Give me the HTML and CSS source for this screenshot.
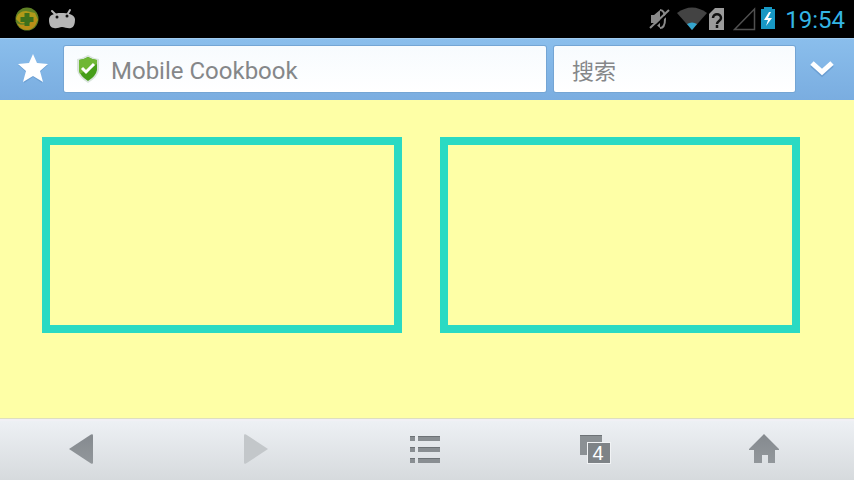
FILE: index.html
```html
<!DOCTYPE html>
<html lang="zh-CN">
<head>
    <meta charset="UTF-8">
    <meta name="viewport" content="width=device-width, initial-scale=1.0">
    <title>Mobile Cookbook</title>
    <link rel="stylesheet" href="styles.css">
</head>
<body>

    <div class="status-bar">
        <div class="status-group">
            <svg width="24" height="24" viewBox="0 0 24 24">
                <circle cx="12" cy="12" r="11.5" fill="#5f8024"/>
                <path d="M1 12C2 7 6 4 11 4l9 2 3 7-5 6-9 1z" fill="#b19a19"/>
                <path d="M2 16c6 4 13 1 20-6 1 7-4 13-10 13-5 0-8-3-10-7z" fill="#b98e18"/>
                <path d="M1 14c4 4 10 3 14 1" fill="none" stroke="#5f8024" stroke-width="1.500"/>
                <path d="M9.500 6h5v4h4v5h-4v4h-5v-4h-4v-5h4z" fill="#3d701b"/>
            </svg>
            <svg width="26" height="22" viewBox="0 0 26 22">
                <path d="M3 3l4 4M21 2l-3 5" stroke="#b5b5b5" stroke-width="2" stroke-linecap="round"/>
                <path d="M0 12c0-5 5-7 12-7s13 1 14 6c0 5-1 8-4 9-3 1-6-1-9-1s-5 2-8 1c-3 0-5-3-5-8z" fill="#b5b5b5"/>
                <circle cx="8" cy="9" r="1.500" fill="#111"/>
                <circle cx="18" cy="8" r="1.500" fill="#111"/>
            </svg>
        </div>
        <div class="status-icons">
            <svg width="28" height="26" viewBox="0 0 28 26">
                <path d="M2 9h3l6-5v18l-6-5H2z" fill="#8a8a8a"/>
                <path d="M11 4q5 0 5 9t-5 9" fill="none" stroke="#8a8a8a" stroke-width="2"/>
                <path d="M2 24L21 6" stroke="#000" stroke-width="2"/>
                <path d="M1 22L20 4" stroke="#8a8a8a" stroke-width="2"/>
            </svg>
            <svg width="32" height="26" viewBox="0 0 32 26">
                <path d="M0 7Q15-4 30 7L15 24z" fill="#434343"/>
                <path d="M10 18q5-3 10 0l-5 6z" fill="#34a5cd"/>
            </svg>
            <svg width="24" height="26" viewBox="0 0 24 26">
                <path d="M6 2h9v22H0V8z" fill="#9b9b9b"/>
                <path d="M4 12c0-5 8-5 8 0 0 3-4 3-4 6M8 19v3" fill="none" stroke="#111" stroke-width="2.500"/>
            </svg>
            <svg width="26" height="26" viewBox="0 0 26 26">
                <path d="M1.500 23.500L21.500 3v20.500z" fill="none" stroke="#505050" stroke-width="1.500"/>
            </svg>
            <svg width="26" height="26" viewBox="0 0 26 26">
                <path d="M5 1h8v2h3v20H2V3h3z" fill="#1798c4"/>
                <path d="M10 6l-5 8h4l-2 6 6-8H9l3-6z" fill="#fff"/>
            </svg>
            <time class="clock">19:54</time>
        </div>
    </div>

    <form class="address-bar">
        <button type="button" class="bar-button bar-star" aria-label="收藏">
            <svg width="30" height="30" viewBox="0 0 30 30">
                <path d="M15 1l4 9 11 1-8 7 2 11-9-6-9 6 2-11-8-7 11-1z" fill="#5e91c7" opacity=".6"/>
                <path d="M15 0l4 9 11 1-8 7 3 11-10-6-10 6 3-11-8-7 11-1z" fill="#fff"/>
            </svg>
        </button>
        <div class="field field-url">
            <svg width="24" height="28" viewBox="0 0 24 28">
                <path d="M12 0Q17 3 23 4V15Q22 22 12 28Q2 22 1 15V4Q7 3 12 0z" fill="#d9e4dc"/>
                <path d="M12 2Q17 5 21 5V15Q20 21 12 26Q4 21 3 15V5Q7 5 12 2z" fill="#469e19"/>
                <path d="M12 2Q17 5 21 5V9L4 19Q3 17 3 15V5Q7 5 12 2z" fill="#6fb735"/>
                <path d="M6 13l4 4 8-8" fill="none" stroke="#fff" stroke-width="3"/>
            </svg>
            <input type="text" class="field-input" aria-label="网址" value="Mobile Cookbook">
        </div>
        <div class="field field-search">
            <input type="text" class="field-input" aria-label="搜索" placeholder="搜索">
        </div>
        <button type="button" class="bar-button bar-more" aria-label="展开">
            <svg width="24" height="18" viewBox="0 0 24 18">
                <path d="M2 5l10 9 10-9" fill="none" stroke="#5e91c7" stroke-width="5" opacity=".6"/>
                <path d="M2 3l10 9 10-9" fill="none" stroke="#fff" stroke-width="5"/>
            </svg>
        </button>
    </form>

    <main class="page">
        <div class="box"></div>
        <div class="box"></div>
    </main>

    <nav class="toolbar">
        <button type="button" class="tool" aria-label="后退">
            <svg width="32" height="32" viewBox="0 0 32 32">
                <path d="M0 16L22 1.500q2-1 2 1v27q0 2-2 1z" fill="url(#grey)"/>
            </svg>
        </button>
        <button type="button" class="tool" aria-label="前进" disabled>
            <svg width="32" height="32" viewBox="0 0 32 32">
                <path d="M29 16L7 1.500q-2-1-2 1v27q0 2 2 1z" fill="#c3c7ca"/>
            </svg>
        </button>
        <button type="button" class="tool" aria-label="菜单">
            <svg width="32" height="32" viewBox="0 0 32 32">
                <path d="M1 3h5v5H1zM9 3h22v5H9zM1 14h5v5H1zM9 14h22v5H9zM1 25h5v5H1zM9 25h22v5H9z" fill="#898e92"/>
                <path d="M1 3h5v1H1zM9 3h22v1H9zM1 14h5v1H1zM9 14h22v1H9zM1 25h5v1H1zM9 25h22v1H9z" fill="#6d7276"/>
            </svg>
        </button>
        <button type="button" class="tool" aria-label="窗口 4">
            <svg width="32" height="32" viewBox="0 0 32 32">
                <path d="M1 2h22v20H1z" fill="#8b9094"/>
                <path d="M1 2h22v1H1z" fill="#6d7276"/>
                <path d="M8 9h24v22H8z" fill="#f1f3f5"/>
                <path d="M9 10h22v20H9z" fill="#7e8387"/>
                <text class="tab-count" x="19" y="27" text-anchor="middle">4</text>
            </svg>
        </button>
        <button type="button" class="tool" aria-label="主页">
            <svg width="32" height="32" viewBox="0 0 32 32">
                <path d="M15 1l15 15v1h-4v13h-7v-8h-6v8H5V17H0v-1z" fill="url(#grey)"/>
                <defs>
                    <linearGradient id="grey" x1="0" y1="0" x2="0" y2="1">
                        <stop offset="0" stop-color="#858a8f"/>
                        <stop offset="1" stop-color="#92979b"/>
                    </linearGradient>
                </defs>
            </svg>
        </button>
    </nav>

</body>
</html>
```
FILE: styles.css
```css
* {
    box-sizing: border-box;
}

body {
    display: flex;
    flex-direction: column;
    min-height: 100vh;
    margin: 0;
    background-color: #feffa6;
    font-family: Roboto, "Noto Sans CJK SC", sans-serif;
}

svg {
    display: block;
    flex: none;
}

button {
    display: flex;
    align-items: center;
    justify-content: center;
    padding: 0;
    border: 0;
    background: none;
}

.status-bar {
    display: flex;
    align-items: center;
    justify-content: space-between;
    height: 38px;
    padding: 0 9px 0 15px;
    background-color: #000;
}

.status-group {
    display: flex;
    align-items: center;
    gap: 10px;
}

.status-icons {
    display: flex;
    align-items: center;
}

.clock {
    padding-top: 2px;
    color: #34b5e5;
    font-size: 24px;
}

.address-bar {
    display: grid;
    grid-template-columns: 56px 2fr 1fr 51px;
    gap: 8px;
    padding: 7px 0 8px;
    background: linear-gradient(#8abeec, #7aade0);
    border-top: 1px solid #9fcbef;
}

.bar-star {
    padding-left: 10px;
}

.bar-more {
    padding-right: 14px;
}

.field {
    display: flex;
    align-items: center;
    gap: 11px;
    min-width: 0;
    height: 46px;
    background: linear-gradient(#f7fbfe, #fff);
    border-radius: 2px;
    box-shadow: 0 0 0 1px #74a5d4;
}

.field-url {
    padding: 0 12px;
}

.field-search {
    padding: 0 18px;
}

.field-input {
    flex: 1;
    min-width: 0;
    padding: 4px 0 0;
    border: 0;
    outline: 0;
    background: none;
    color: #858789;
    font-family: inherit;
    font-size: 24px;
}

.field-search .field-input {
    font-size: 22px;
}

.field-input::placeholder {
    color: #858789;
}

.page {
    flex: 1;
    display: grid;
    grid-template-columns: 1fr 1fr;
    align-items: start;
    gap: 38px;
    padding: 37px 54px 37px 42px;
}

.box {
    height: 196px;
    border: 8px solid #2adac3;
}

.toolbar {
    display: grid;
    grid-template-columns: repeat(5, 1fr);
    height: 62px;
    padding: 0 4px 2px 0;
    background: linear-gradient(#eef1f5, #d6dadd);
    border-top: 1px solid #dedfc0;
    box-shadow: inset 0 2px #f1f0f5;
}

.tab-count {
    fill: #fff;
    font-size: 20px;
    font-weight: 500;
}
```
